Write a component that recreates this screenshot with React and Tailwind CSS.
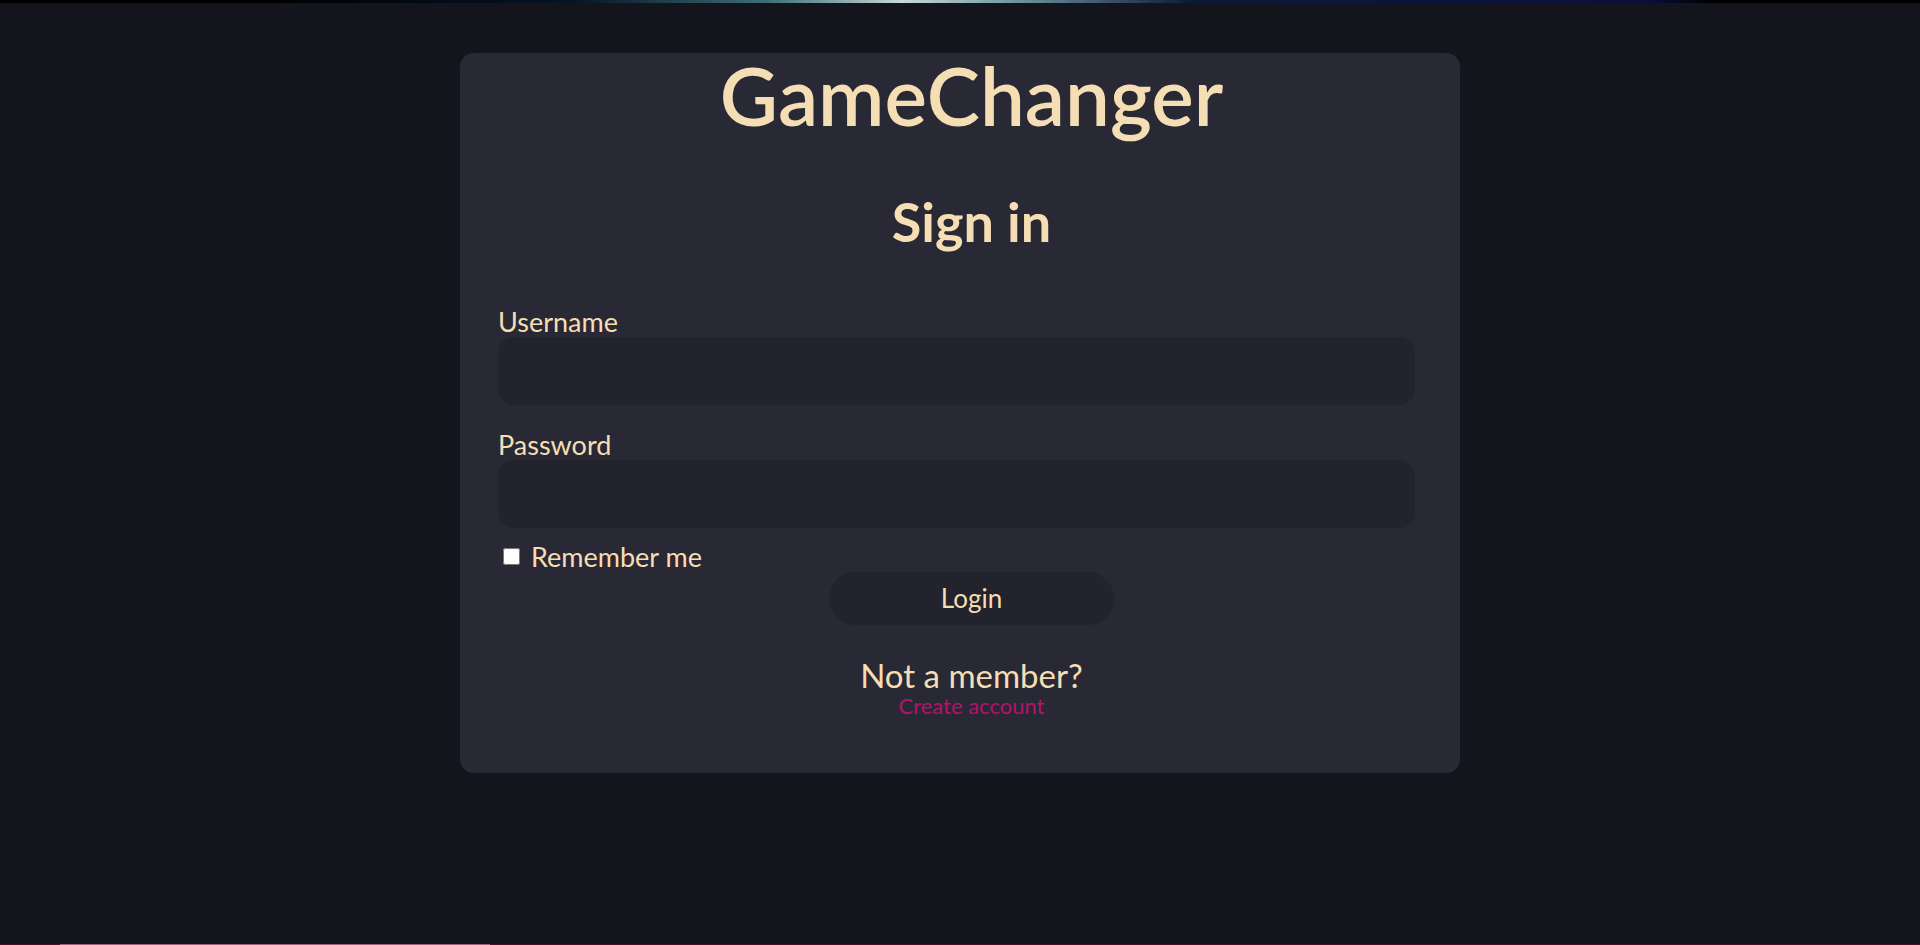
import { useState } from 'react';

function LoginCard() {
  const [username, setUsername] = useState('');
  const [password, setPassword] = useState('');
  const [remember, setRemember] = useState(false);

  return (
    <div className="mx-auto mt-[50px] w-[1000px] h-[720px] rounded-[14px] bg-[#292935] pl-[38px] pr-[15px] flex flex-col">
      <h1 className="text-center text-[80px] leading-[84px] font-semibold text-[#f5deb3]">GameChanger</h1>
      <h2 className="mt-[52px] text-center text-[54px] leading-[65px] font-bold text-[#f5deb3]">Sign in</h2>

      <label className="mt-[52px] text-[27px] leading-[31px] text-[#f5deb3]">Username</label>
      <input
        value={username}
        onChange={(e) => setUsername(e.target.value)}
        className="w-[917px] h-[68px] rounded-[16px] bg-[#23232e] px-4 text-[22px] text-[#f5deb3] outline-none"
      />

      <label className="mt-[24px] text-[27px] leading-[31px] text-[#f5deb3]">Password</label>
      <input
        type="password"
        value={password}
        onChange={(e) => setPassword(e.target.value)}
        className="w-[917px] h-[68px] rounded-[16px] bg-[#23232e] px-4 text-[22px] text-[#f5deb3] outline-none"
      />

      <label className="mt-[13px] flex items-center gap-[11px] pl-[5px] text-[27px] leading-[31px] text-[#f5deb3]">
        <input
          type="checkbox"
          checked={remember}
          onChange={(e) => setRemember(e.target.checked)}
          className="w-[17px] h-[17px] m-0"
        />
        Remember me
      </label>

      <button className="self-center w-[285px] h-[53px] rounded-full bg-[#23232e] text-[26px] text-[#f5deb3]">
        Login
      </button>

      <p className="mt-[31px] text-center text-[33px] leading-[38px] text-[#f5deb3]">Not a member?</p>
      <a href="#" className="text-center text-[22px] leading-[24px] text-[#b3136c]">Create account</a>
    </div>
  );
}

export default function App() {
  return (
    <div className="h-[945px] bg-[#14141d] flex flex-col font-['Lato',sans-serif]">
      <div className="h-[3px] bg-[linear-gradient(90deg,#000_0%,#000_14%,#061428_30%,#3f6f78_40%,#c8d8d8_47%,#7aa0a8_52%,#0c1a3a_62%,#0a0f3a_86%,#000_89%,#000_100%)]" />
      <LoginCard />
      <div className="mt-auto h-px flex">
        <div className="w-[60px] bg-[#4a0f2a]" />
        <div className="w-[430px] bg-[#a06080]" />
        <div className="flex-1 bg-[#4a0f2a]" />
      </div>
    </div>
  );
}
